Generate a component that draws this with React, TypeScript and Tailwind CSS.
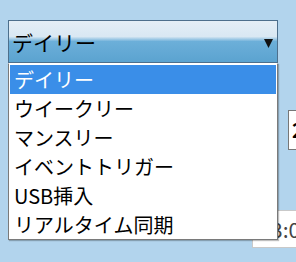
import React from 'react'

const options = ['デイリー', 'ウイークリー', 'マンスリー', 'イベントトリガー', 'USB挿入', 'リアルタイム同期']

export default function App() {
  const selected = 0

  return (
    <div className="relative w-[296px] h-[262px] overflow-hidden bg-[#b2d4ed] font-['Noto_Sans_CJK_JP','Noto_Sans',sans-serif] text-black">
      {/* フォーム本体（ドロップダウンの下） */}
      <div className="flex flex-col pt-[20px] pl-[8px]">
        <div className="w-[270px] h-[43px] border border-[#4d6f8c] bg-[linear-gradient(to_bottom,#e4eef6_0%,#d9e8f3_38%,#6cafd9_50%,#5ba3d0_100%)] flex items-center justify-between pl-[3px] pr-[4px]">
          <span className="text-[21px] leading-none mt-[2px]">デイリー</span>
          <svg width="9" height="9" viewBox="0 0 9 9" className="mt-[4px]">
            <polygon points="0,0 9,0 4.5,9" fill="#111" />
          </svg>
        </div>

        <div className="ml-[280px] mt-[47px] w-[40px] h-[40px] border border-[#777] bg-white flex items-center pl-[3px]">
          <span className="text-[20px] font-bold leading-none">2</span>
        </div>

        <div className="ml-[244px] mt-[60px] w-[70px] h-[38px] border border-[#c9c9c9] bg-white flex items-center pl-[18px]">
          <span className="text-[21px] leading-none text-[#444]">3:00</span>
        </div>
      </div>

      {/* 開いたリスト */}
      <div className="absolute left-[8px] top-[63px] w-[270px] h-[177px] bg-white border border-[#7a7a7a] border-t-white p-[1px] shadow-[1px_1px_1px_rgba(0,0,0,0.25)]">
        {options.map((opt, i) => (
          <div
            key={opt}
            className={`h-[29px] flex items-center pl-[4px] text-[20px] leading-none ${
              i === selected ? 'bg-[#3a8ee8] text-white' : 'text-black'
            }`}
          >
            {opt}
          </div>
        ))}
      </div>
    </div>
  )
}
